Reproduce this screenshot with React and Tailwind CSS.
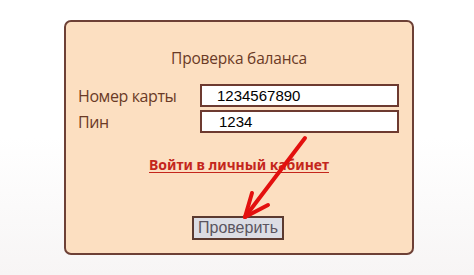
import React from 'react';

const Arrow = () => (
  <svg className="absolute left-0 top-0 pointer-events-none" width="474" height="275" viewBox="0 0 474 275">
    <g stroke="#e3100e" strokeWidth="4" strokeLinecap="round" fill="none">
      <line x1="305" y1="138" x2="245" y2="217" />
      <line x1="245" y1="217" x2="252" y2="193" />
      <line x1="245" y1="217" x2="268" y2="205" />
    </g>
  </svg>
);

export default function App() {
  return (
    <div className="relative w-[474px] h-[275px] bg-gradient-to-b from-white via-white to-[#f7f5f5] pt-[20px] pl-[64px]">
      <div
        className="w-[350px] h-[235px] bg-[#fcdfc1] border-2 border-[#6d4036] rounded-[7px] flex flex-col"
        style={{ fontFamily: '"Open Sans", "Noto Sans", sans-serif' }}
      >
        <div className="mt-[26px] text-center text-[15.5px] tracking-[-0.2px] leading-[20px] text-[#6a3a26]">Проверка баланса</div>
        <div className="mt-[16px] flex flex-col gap-[3px] pl-[12px]">
          <div className="flex items-center">
            <span className="w-[122px] text-[16px] tracking-[-0.4px] leading-[22px] text-[#6a3a26]">Номер карты</span>
            <div
              className="w-[199px] h-[23px] bg-white border-2 border-[#6d3a30] pl-[15px] text-[15px] leading-[19px] text-black"
              style={{ fontFamily: '"Liberation Sans", Arial, sans-serif' }}
            >
              1234567890
            </div>
          </div>
          <div className="flex items-center">
            <span className="w-[122px] text-[16px] tracking-[-0.4px] leading-[22px] text-[#6a3a26]">Пин</span>
            <div
              className="w-[199px] h-[23px] bg-white border-2 border-[#6d3a30] pl-[17px] text-[15px] leading-[19px] text-black"
              style={{ fontFamily: '"Liberation Sans", Arial, sans-serif' }}
            >
              1234
            </div>
          </div>
        </div>
        <div className="mt-[19px] text-center">
          <span
            className="text-[14px] leading-[18px] font-bold text-[#c4261c] underline underline-offset-[2px]"
            style={{ fontFamily: '"Noto Sans", "Open Sans", sans-serif' }}
          >
            Войти в личный кабинет
          </span>
        </div>
        <div className="mt-[40px] flex justify-center pr-[2px]">
          <div
            className="w-[92px] h-[24px] bg-[#dcdde4] border-2 border-[#5b3a30] flex items-center justify-center text-[16px] text-[#5a5560]"
            style={{ fontFamily: '"Liberation Sans", Arial, sans-serif' }}
          >
            Проверить
          </div>
        </div>
      </div>
      <Arrow />
    </div>
  );
}
